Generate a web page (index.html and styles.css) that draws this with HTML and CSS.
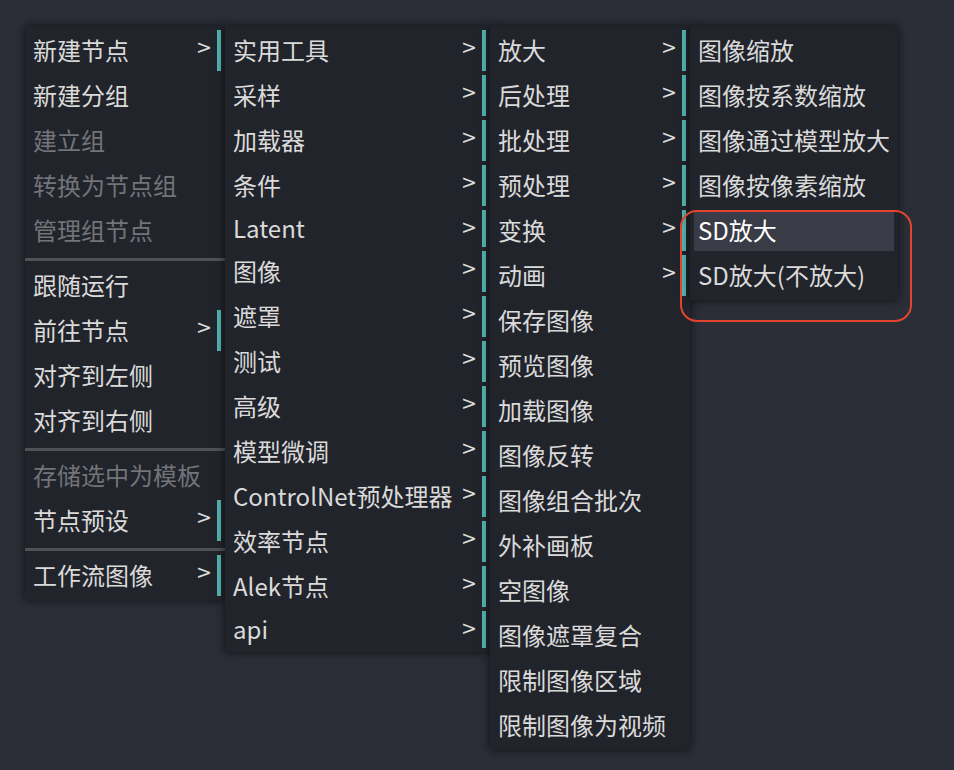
FILE: index.html
```html
<!DOCTYPE html>
<html lang="zh-CN">
<head>
<meta charset="utf-8">
<title>Context menu</title>
<link rel="stylesheet" href="styles.css">
</head>
<body>
<div class="canvas">
  <div class="menu menu-1">
    <div class="entry sub">新建节点</div>
    <div class="entry">新建分组</div>
    <div class="entry disabled">建立组</div>
    <div class="entry disabled">转换为节点组</div>
    <div class="entry disabled">管理组节点</div>
    <div class="separator"></div>
    <div class="entry">跟随运行</div>
    <div class="entry sub">前往节点</div>
    <div class="entry">对齐到左侧</div>
    <div class="entry">对齐到右侧</div>
    <div class="separator"></div>
    <div class="entry disabled">存储选中为模板</div>
    <div class="entry sub">节点预设</div>
    <div class="separator"></div>
    <div class="entry sub">工作流图像</div>
  </div>

  <div class="menu menu-2">
    <div class="entry sub">实用工具</div>
    <div class="entry sub">采样</div>
    <div class="entry sub">加载器</div>
    <div class="entry sub">条件</div>
    <div class="entry sub latin">Latent</div>
    <div class="entry sub">图像</div>
    <div class="entry sub">遮罩</div>
    <div class="entry sub">测试</div>
    <div class="entry sub">高级</div>
    <div class="entry sub">模型微调</div>
    <div class="entry sub">ControlNet预处理器</div>
    <div class="entry sub">效率节点</div>
    <div class="entry sub">Alek节点</div>
    <div class="entry sub latin">api</div>
  </div>

  <div class="menu menu-3">
    <div class="entry sub">放大</div>
    <div class="entry sub">后处理</div>
    <div class="entry sub">批处理</div>
    <div class="entry sub">预处理</div>
    <div class="entry sub">变换</div>
    <div class="entry sub">动画</div>
    <div class="entry">保存图像</div>
    <div class="entry">预览图像</div>
    <div class="entry">加载图像</div>
    <div class="entry">图像反转</div>
    <div class="entry">图像组合批次</div>
    <div class="entry">外补画板</div>
    <div class="entry">空图像</div>
    <div class="entry">图像遮罩复合</div>
    <div class="entry">限制图像区域</div>
    <div class="entry">限制图像为视频</div>
  </div>

  <div class="menu menu-4">
    <div class="entry">图像缩放</div>
    <div class="entry">图像按系数缩放</div>
    <div class="entry">图像通过模型放大</div>
    <div class="entry">图像按像素缩放</div>
    <div class="entry hover">SD放大</div>
    <div class="entry">SD放大(不放大)</div>
  </div>

  <div class="annotation"></div>
</div>
</body>
</html>
```

FILE: styles.css
```css
html, body {
  margin: 0;
  padding: 0;
}

body {
  background: #2b2e37;
  font-family: "Noto Sans CJK SC", "Noto Sans", sans-serif;
  font-size: 24px;
  color: #d9d9d9;
}

.canvas {
  position: relative;
  width: 954px;
  height: 770px;
  overflow: hidden;
}

.menu {
  position: absolute;
  top: 26px;
  box-sizing: border-box;
  display: flex;
  flex-direction: column;
  padding: 2px 0;
  background: #22242b;
  box-shadow: 0 0 9px rgba(0, 0, 0, 0.65);
}

.menu-1 { left: 25px; width: 200px; z-index: 1; }
.menu-2 { left: 225px; width: 265px; z-index: 2; }
.menu-3 { left: 490px; width: 200px; z-index: 3; }
.menu-4 { left: 690px; width: 208px; z-index: 4; }

.entry {
  position: relative;
  box-sizing: border-box;
  height: 41px;
  line-height: 39px;
  margin: 2px 4px;
  padding-left: 4px;
  white-space: nowrap;
  color: #dadada;
}

.entry.latin {
  height: 37px;
  line-height: 35px;
}

.entry.disabled {
  color: #727479;
}

.entry.sub {
  border-right: 4px solid #52b6b2;
}

.entry.sub::after {
  content: ">";
  position: absolute;
  top: 7px;
  right: 5px;
  font-family: "DejaVu Sans", sans-serif;
  font-size: 19px;
  line-height: 20px;
  color: #dcdcdc;
}

.entry.hover {
  background: #393b46;
  color: #ffffff;
}

.separator {
  height: 3px;
  margin: 5px 0 2px;
  background: #505257;
}

.annotation {
  position: absolute;
  left: 680px;
  top: 210px;
  width: 232px;
  height: 112px;
  box-sizing: border-box;
  border: 2.5px solid #e3442d;
  border-radius: 17px;
  z-index: 5;
}
```
